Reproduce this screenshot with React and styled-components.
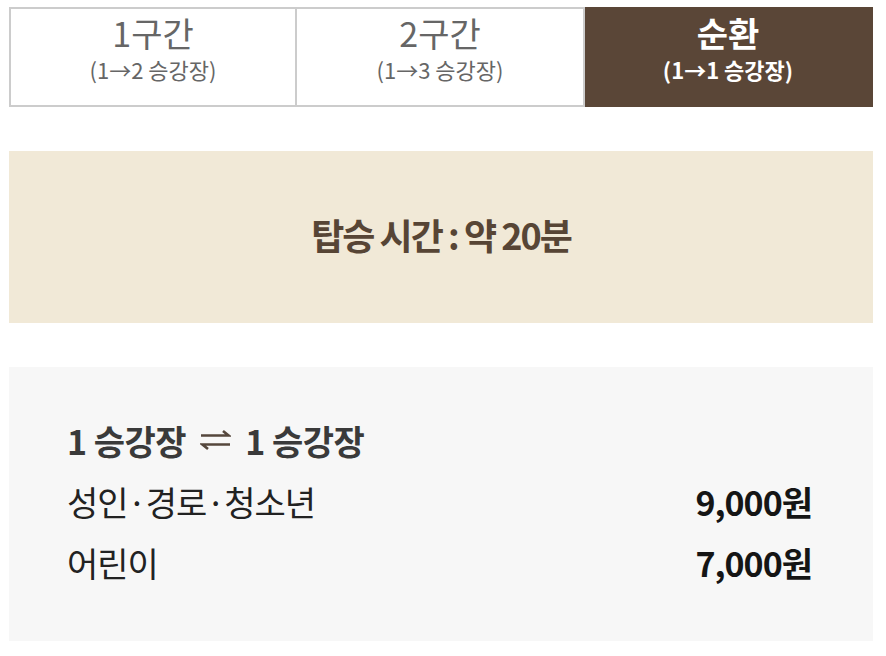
import React, { useState } from "react";
import styled, { createGlobalStyle } from "styled-components";

const GlobalStyle = createGlobalStyle`
  body {
    margin: 0;
    background: #fff;
    font-family: "Noto Sans CJK KR", "Noto Sans", sans-serif;
  }
`;

const Page = styled.div`
  width: 864px;
  padding: 7px 9px 0 9px;
`;

const Tabs = styled.ul`
  display: grid;
  grid-template-columns: repeat(3, 1fr);
  margin: 0;
  padding: 0;
  list-style: none;
`;

const Tab = styled.li`
  height: 100px;
  box-sizing: border-box;
  padding-top: 3px;
  display: flex;
  flex-direction: column;
  align-items: center;
  border: 2px solid ${(props) => (props.active ? "#5a4637" : "#cccccc")};
  border-left-width: ${(props) => (props.first ? "2px" : "0")};
  background-color: ${(props) => (props.active ? "#5a4637" : "#fff")};
  color: ${(props) => (props.active ? "#fff" : "#666")};
  font-weight: ${(props) => (props.active ? 700 : 400)};
  cursor: pointer;
  > .name {
    font-size: 34px;
    line-height: 42px;
  }
  > .route {
    font-size: 22px;
    line-height: 30px;
  }
`;

const TimeBox = styled.div`
  margin-top: 44px;
  height: 172px;
  box-sizing: border-box;
  padding-bottom: 7px;
  background-color: #f1e9d7;
  display: flex;
  align-items: center;
  justify-content: center;
  color: #574535;
  font-size: 36px;
  font-weight: 700;
  letter-spacing: -2px;
`;

const FareBox = styled.div`
  margin-top: 44px;
  background-color: #f7f7f7;
  padding: 42px 61px 48px 58px;
`;

const FareTitle = styled.div`
  display: flex;
  align-items: center;
  column-gap: 14px;
  height: 62px;
  color: #3a3a3a;
  font-size: 34px;
  font-weight: 700;
  letter-spacing: -0.5px;
`;

const FareRow = styled.div`
  display: flex;
  justify-content: space-between;
  align-items: center;
  height: 61px;
  color: #222;
  font-size: 34px;
  letter-spacing: -1px;
  > .price {
    font-weight: 700;
    color: #151515;
    letter-spacing: -1px;
  }
`;

const SwapIcon = () => (
  <svg width="31" height="22" viewBox="0 0 31 22" fill="none" stroke="#55473d" strokeWidth="2.6">
    <path d="M1 6.5 H28.5 L23 2" />
    <path d="M30 15.5 H2.5 L8 20" />
  </svg>
);

const sections = [
  { name: "1구간", route: "(1→2 승강장)" },
  { name: "2구간", route: "(1→3 승강장)" },
  { name: "순환", route: "(1→1 승강장)" },
];

export default function App() {
  const [active, setActive] = useState(2);
  return (
    <Page>
      <GlobalStyle />
      <Tabs>
        {sections.map((s, idx) => (
          <Tab key={idx} first={idx === 0} active={idx === active} onClick={() => setActive(idx)}>
            <span className="name">{s.name}</span>
            <span className="route">{s.route}</span>
          </Tab>
        ))}
      </Tabs>
      <TimeBox>탑승 시간 : 약 20분</TimeBox>
      <FareBox>
        <FareTitle>
          <span>1 승강장</span>
          <SwapIcon />
          <span>1 승강장</span>
        </FareTitle>
        <FareRow>
          <span>성인·경로·청소년</span>
          <span className="price">9,000원</span>
        </FareRow>
        <FareRow>
          <span>어린이</span>
          <span className="price">7,000원</span>
        </FareRow>
      </FareBox>
    </Page>
  );
}
